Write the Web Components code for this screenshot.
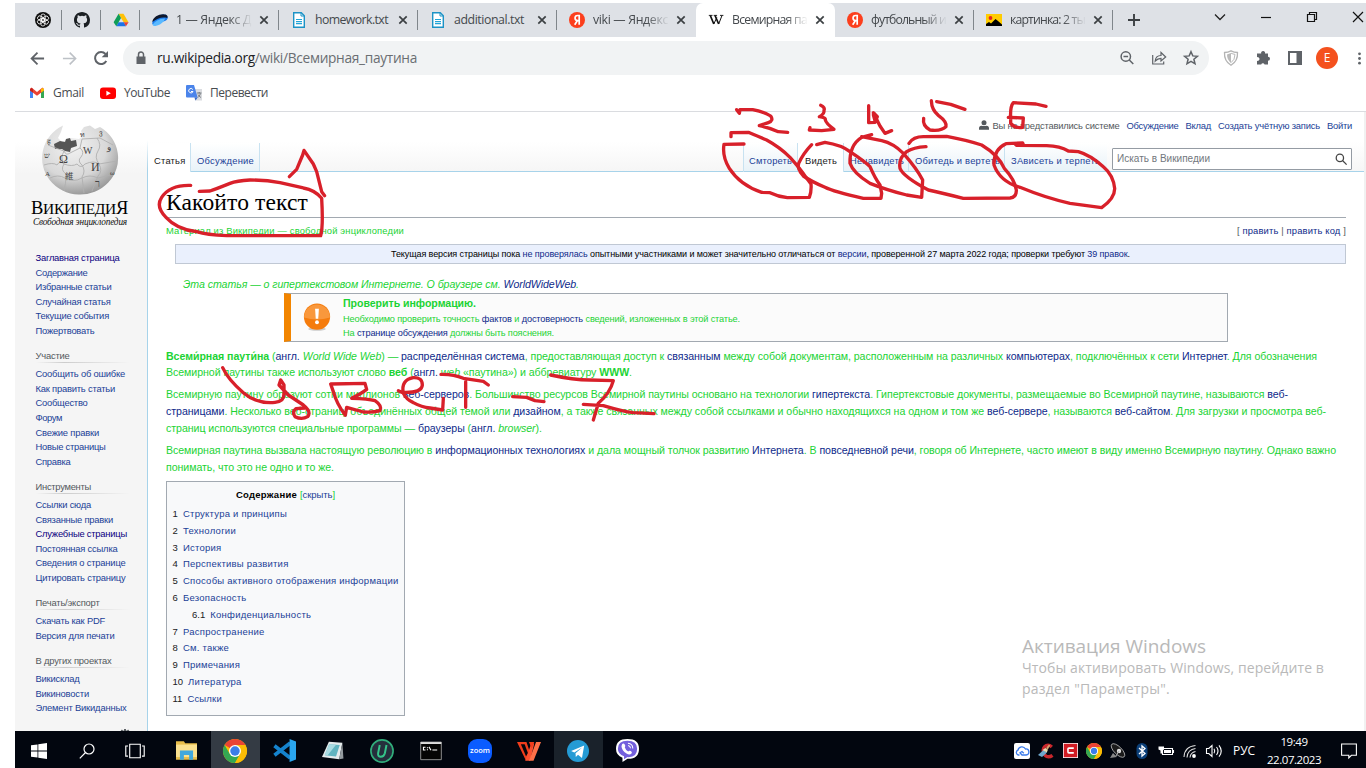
<!DOCTYPE html>
<html lang="ru">
<head>
<meta charset="utf-8">
<title>Всемирная паутина</title>
<style>
html,body{margin:0;padding:0;background:#fff;overflow:hidden}
</style>
</head>
<body>
<desk-top></desk-top>
<script>
const define = (name, css, html, after) => customElements.define(name, class extends HTMLElement {
  constructor() {
    super();
    this.attachShadow({ mode: 'open' });
  }
  connectedCallback() {
    const t = document.createElement('template');
    t.innerHTML = `<style>*{box-sizing:border-box}${css}</style>${typeof html === 'function' ? html(this) : html}`;
    this.shadowRoot.replaceChildren(t.content.cloneNode(true));
    if (after) after(this);
  }
});

/* One line of text set to a given measure through its letter spacing. */
define('fit-line', ':host{display:block;white-space:pre;width:max-content} span{display:inline-block}', '<span><slot></slot></span>', el => {
  const w = parseFloat(el.getAttribute('w'));
  if (!w) return;
  const n = el.textContent.length;
  const natural = el.shadowRoot.querySelector('span').getBoundingClientRect().width;
  if (n && natural) el.style.letterSpacing = ((w - natural) / n).toFixed(4) + 'px';
  el.style.width = w + 'px';
});

const ICONS = {
  gpt: '<circle cx="8" cy="8" r="8" fill="#111"/><g fill="none" stroke="#fff" stroke-width=".8"><rect x="6" y="2" width="4.200" height="7.400" rx="2.100"/><rect x="6" y="2" width="4.200" height="7.400" rx="2.100" transform="rotate(60 8 8)"/><rect x="6" y="2" width="4.200" height="7.400" rx="2.100" transform="rotate(120 8 8)"/><rect x="6" y="2" width="4.200" height="7.400" rx="2.100" transform="rotate(180 8 8)"/><rect x="6" y="2" width="4.200" height="7.400" rx="2.100" transform="rotate(240 8 8)"/><rect x="6" y="2" width="4.200" height="7.400" rx="2.100" transform="rotate(300 8 8)"/></g>',
  github: '<path fill="#1b1f23" d="M8 0C3.58 0 0 3.58 0 8c0 3.54 2.29 6.53 5.47 7.59.4.07.55-.17.55-.38 0-.19-.01-.82-.01-1.49-2.01.37-2.53-.49-2.69-.94-.09-.23-.48-.94-.82-1.13-.28-.15-.68-.52-.01-.53.63-.01 1.08.58 1.23.82.72 1.21 1.87.87 2.33.66.07-.52.28-.87.51-1.07-1.78-.2-3.64-.89-3.64-3.95 0-.87.31-1.59.82-2.15-.08-.2-.36-1.02.08-2.12 0 0 .67-.21 2.2.82a7.6 7.6 0 0 1 4 0c1.53-1.04 2.2-.82 2.2-.82.44 1.1.16 1.92.08 2.12.51.56.82 1.27.82 2.15 0 3.07-1.87 3.75-3.65 3.95.29.25.54.73.54 1.48 0 1.07-.01 1.93-.01 2.2 0 .21.15.46.55.38A8.01 8.01 0 0 0 16 8c0-4.42-3.58-8-8-8z"/>',
  drive: '<path fill="#ffc107" d="M5.600 1.800h4.900l5 8.400h-4.800L8 6z"/><path fill="#1a73e8" d="M5.400 10.200h5.600l2 4.100H3.300z"/><path fill="#0f9d58" d="M5.600 1.800 8 6 3.300 14.300.6 10.200z"/><path fill="#ea4335" d="M10.700 10.200h4.900L13 14.300z"/>',
  disk: '<path fill="#1c7df0" d="M.3 12.500C-.5 8 6 2.200 12 2.600c3 .1 4 1.900 3.700 3.900Q15 8 13 9z"/><path fill="#10182c" d="M.3 10C1 5 7 2 12 2.400c3.500 0 4 2.100 3.300 3.600C10 4.500 5 6.500.3 10z"/><path fill="#5ab9ff" d="M.7 13C2 9.500 8 6.300 13 6.500c-1 5-8 7.500-10.500 7.500Q1 14 .7 13z"/>',
  doc: '<path fill="#fff" stroke="#1c93c6" stroke-width="1.400" d="M2.700.7h7.600l3 3v11.600H2.700z"/><path d="M10 1v3h3" fill="none" stroke="#1c93c6"/><path stroke="#22a5d8" stroke-width="1.200" d="M5 7.500h6M5 9.600h6M5 11.700h6"/>',
  ya: '<circle cx="8" cy="8" r="8" fill="#fc3f1d"/><path fill="none" stroke="#fff" stroke-width="1.700" d="M10.200 12.800V3.500H8.600a2.500 2.500 0 0 0 0 5.100h1.600M8.300 8.700 5.700 12.800"/>',
  wiki: '<g fill="none" stroke="#111"><path stroke-width="1.700" d="m2.300 3.500 3.500 8.500M7 3.500l3.700 8.500"/><path stroke-width="1" d="m5.800 12 3-6.500M10.700 12 14 3.500"/><path stroke-width=".9" d="M.8 3.400h3.700M5.700 3.400h3.400M12 3.400h3.400"/></g>',
  image: '<path fill="#fc0" d="M0 2h16v12H0z"/><circle cx="4.500" cy="6" r="1.900" fill="#e52620"/><path d="M0 14v-2l3-2 2 1.500L9.500 7 12 9l4 3.500V14z"/>',
  close: '<path stroke="#3c4043" stroke-width="1.700" d="m4.300 4.300 7.400 7.400M11.700 4.300l-7.400 7.400"/>',
  plus: '<path stroke="#3c4043" stroke-width="1.900" d="M8 2v12M2 8h12"/>',
  chev: '<path fill="none" stroke="#222" stroke-width="1.300" d="m3 5.500 5 5 5-5"/>',
  min: '<path stroke="#111" stroke-width="1.200" d="M3 8.500h10"/>',
  restore: '<path fill="none" stroke="#111" stroke-width="1.200" d="M3.500 5.500h7v7h-7zM5.500 5.500v-2h7v7h-2"/>',
  wclose: '<path stroke="#111" stroke-width="1.200" d="m3 3 10 10M13 3 3 13"/>',
  back: '<path fill="none" stroke="#5f6368" stroke-width="1.900" d="M15 8H2M8 1.700 1.700 8 8 14.300"/>',
  fwd: '<path fill="none" stroke="#bdc1c6" stroke-width="1.700" d="M1 8h13M8.200 1.700 14.500 8l-6.300 6.300"/>',
  reload: '<path fill="none" stroke="#5f6368" stroke-width="2" d="M13.300 11A6 6 0 1 1 12.500 4"/><path fill="#5f6368" d="M15 1v6.300H8.700z"/>',
  lock: '<path fill="#5f6368" d="M3.500 6.500h9V14h-9z"/><path fill="none" stroke="#5f6368" stroke-width="1.500" d="M5.500 7V4.500a2.500 2.500 0 0 1 5 0V7"/>',
  zoomout: '<g fill="none" stroke="#5f6368" stroke-width="1.500"><circle cx="6.800" cy="6.500" r="4.700"/><path d="m10.300 10 4 4M4.500 6.500h4.600"/></g>',
  share: '<path fill="none" stroke="#5f6368" stroke-width="1.200" d="M1.700 5v9h11v-2.500M4.200 11C4.500 7.500 7 5.600 10 5.500V2.500L14.700 7 10 11V8.300C7.500 8.300 6 9 4.200 11z"/>',
  star: '<path fill="none" stroke="#5f6368" stroke-width="1.500" stroke-linejoin="miter" d="m8 1.700 1.800 4.200 4.600.4-3.500 3 1.100 4.500L8 11.400l-4 2.400 1.100-4.500-3.500-3 4.600-.4z"/>',
  shield: '<path fill="#fff" stroke="#b4b4b4" stroke-width="1.300" d="M1.500 2.500Q5 2.300 8 .8q3 1.500 6.500 1.700Q15 11 8 15.300 1 11 1.500 2.500z"/><path fill="#b9b9b9" d="M4 4.500 8 3v10Q4 10 4 4.500z"/><path fill="none" stroke="#b9b9b9" d="M8 3.200q2 .9 4 1.200Q12 10 8 12.700"/>',
  puzzle: '<path fill="#5f6368" d="M3 3.500h3.200a2 2 0 1 1 3.800 0h3v3.300a2 2 0 1 1 0 4V14.500H9.600a1.800 1.800 0 0 0-3.400 0H2v-3.700a1.900 1.900 0 1 0 0-3.600V3.500z"/>',
  panel: '<path fill="none" stroke="#5f6368" stroke-width="2" d="M2 2h12v12H2z"/><path fill="#5f6368" d="M9.500 2H14v12H9.500z"/>',
  dots: '<g fill="#5f6368"><circle cx="8" cy="3" r="1.500"/><circle cx="8" cy="8" r="1.500"/><circle cx="8" cy="13" r="1.500"/></g>',
  gmail: '<path fill="#4285f4" d="M1 4v9h3V7z"/><path fill="#34a853" d="M12 7v6h3V4z"/><path fill="#ea4335" d="m1 4 1.500-1.500L8 7l5.500-4.500L15 4v1.500L8 10.800 1 5.500z"/><path fill="#c5221f" d="M1 4 2.500 3 4 4v3.500L1 5.500z"/><path fill="#fbbc04" d="m15 4-1.500-1L12 4v3.500l3-2z"/>',
  youtube: '<rect y="2.500" width="16" height="11.500" rx="3" fill="#f00"/><path fill="#fff" d="m6.400 5.700 4.400 2.500-4.400 2.500z"/>',
  translate: '<path fill="#dadce0" d="M7 4h9v11.500H9z"/><path fill="#4b84ea" d="M1 0h7l3.700 12.500H1q-1 0-1-1V1q0-1 1-1z"/><path fill="#3467c9" d="m8.500 12.500 3.200 0L9.500 15.500z"/><path fill="none" stroke="#fff" stroke-width="1" d="M6.800 4.500A2.200 2.200 0 1 0 7 6.500H5"/><path fill="none" stroke="#6d7277" stroke-width=".9" d="M11 8h4.500M13.200 7v1.500M14.500 8.500q-1 3-2.500 4M12 9.500q1 2 3 3"/>',
  user: '<circle cx="8" cy="4.500" r="4" fill="#54595d"/><path fill="#54595d" d="M0 15.500v-2Q0 9 4 9q4 1.500 8 0 4 0 4 4.500v2z"/>',
  find: '<g fill="none" stroke="#444" stroke-width="1.700"><circle cx="6.500" cy="6.500" r="4.900"/><path d="m10 10 5.500 5.500"/></g>',
  win: '<path fill="#fff" d="M0 2.300 6.500 1.400v6.100H0zM7.300 1.300 16 0v7.500H7.300zM0 8.400h6.500v6.200L0 13.700zM7.300 8.400H16V16l-8.700-1.200z"/>',
  tsearch: '<g fill="none" stroke="#fff" stroke-width="1.200"><circle cx="10" cy="6" r="5"/><path d="M6.500 9.500.8 15.300"/></g>',
  tview: '<g fill="none" stroke="#fff"><path d="M3.300 2h9.400v12H3.300zM1.800 3.500h-2v9h2M14.200 3.500h2v9h-2"/></g>',
  explorer: '<path fill="#e8bd4a" d="M0 1h6l1 1.500h9V15H0z"/><path fill="#fbe18f" d="M0 3.500h16V13H0z"/><path fill="#41a8dd" d="M3 8h10v7h-3v-3.500H6V15H3z"/>',
  chrome: '<circle cx="8" cy="8" r="8" fill="#fbbc04"/><path fill="#ea4335" d="M8 8 1.070 4A8 8 0 0 1 14.930 4H8z"/><path fill="#34a853" d="M1.070 4A8 8 0 0 0 8 16L11.460 10 8 8 4.540 10z"/><path fill="#fbbc04" d="M8 4h6.930A8 8 0 0 1 8 16l3.460-6z"/><circle cx="8" cy="8" r="4" fill="#fff"/><circle cx="8" cy="8" r="3.150" fill="#3b7de9"/>',
  vscode: '<path fill="none" stroke="#1583cd" stroke-width="2.600" d="m12 2.800-11 8.500M12 13.200 1 4.700"/><path fill="#2aa5ee" d="M11.500 0 16 1.800v12.400L11.500 16z"/>',
  notepad: '<path fill="#e4eaec" d="M5 1.200 14.800 2 12.500 14 0 12.300z"/><path fill="#61b4c0" d="m5.200 3 7.700.7L10.200 12l-8.200-1z"/><path fill="#a9dbe2" d="m5.200 3 5 .4L4 11.200l-2-.3z"/><path fill="#949b9f" d="m14.800 2 .8 11.500-3.100.5z"/>',
  iobit: '<circle cx="8" cy="8" r="7.400" fill="#252f3c" stroke="#31ad7b" stroke-width="1.100"/><path fill="none" stroke="#35c58a" stroke-width="1.300" d="M6.500 4 5.400 9.500q-.3 2.300 1.800 2.300T9.900 9.500L11 4"/>',
  cmd: '<path fill="#050505" stroke="#a9a9a9" stroke-width=".6" d="M.5 1.500h15v12.800H.5z"/><path fill="#ddd" d="M.5 1.500h15v1.400H.5z"/><path fill="none" stroke="#fff" stroke-width=".8" d="M4 5.300H2.500v2H4M5.400 5.300v.7M5.400 6.700v.7M6.500 5l1.500 2.500M9 7.300h3.500"/>',
  wps: '<path fill="#f23d1c" d="M0 2h6.300L9 10l-3 4.500z"/><path fill="#05070c" d="M2.600 3.500h2.500L7.300 9.500l-1.300 2z"/><path fill="#fa5030" d="M5.500 14.500 9.500 3l2 0L8.800 14.500z"/><path fill="#ff7048" d="M11 14.500 16 2h-3.300L8 14.500z"/><path fill="#f23d1c" d="M8 2h3.500L9.800 6.500z"/>',
  telegram: '<circle cx="8" cy="8" r="8" fill="#249bd5"/><path fill="#fff" d="m3 8 9.500-4-1.600 9L8 10.800l-1.600 1.500-.2-2.600L11 5.500 5.300 9z"/>',
  viber: '<path fill="#fff" d="M8 0q8 0 8 6.800Q16 14 8 13.800L4.500 16v-3Q0 11.500 0 6.800 0 0 8 0z"/><path fill="#7360dd" d="M8 1.200q6.700 0 6.700 5.600Q14.700 13 8 12.600L5.600 14v-2Q1.300 10.500 1.300 6.800 1.300 1.200 8 1.200z"/><path fill="#fff" d="M4.300 3.500q1-.9 1.800.4.800 1.200 0 1.800Q6.800 8 8.500 8.700q.8-1 1.800-.3 1.300.9.500 1.700-1.400 1.300-3.500-.1Q4 8 3.800 5z"/><path fill="none" stroke="#fff" stroke-width=".7" d="M8.300 3q3.300.3 3.400 3.600M8.400 4.600q1.600.2 1.700 1.800"/>',
  cloud: '<rect width="16" height="16" rx="2" fill="#fff"/><path fill="none" stroke="#3b7bea" stroke-width="1.300" d="M5.500 12H4.300A2.500 2.500 0 0 1 4 7.200 4 4 0 0 1 11.500 6a3 3 0 0 1 .7 6H8L6 9.800l2-1.300 1.800 1.800"/>',
  ccleaner: '<path fill="none" stroke="#c8272c" stroke-width="3.400" d="M13.800 4Q11 1.300 8.300 2.500 4.500 4.500 5.500 9q1 4.800 5 4.800 2 0 4-1.500"/><path fill="#d9a06a" d="m8 5 3-3.500 1.200 1L9.500 7z"/><path fill="#6fa7cc" d="M5.500 7 9 9.500 4 14 0 12z"/><path fill="#e9d9b0" d="m4.500 7 3-2 2.300 2-1 2.500z"/>',
  redc: '<path fill="#fff" d="M0 0h16v16H0z"/><path fill="#d21d24" d="M.8.8h14.400v14.400H.8z"/><path fill="none" stroke="#fff" stroke-width="1.700" d="M11.500 5.500H6.300q-1 0-1 1v3q0 1 1 1h5.200"/>',
  dish: '<path fill="#888" d="m0 15 3-5 4 4z"/><ellipse cx="8" cy="7.500" rx="3.800" ry="8.800" transform="rotate(-45 8 7.500)" fill="#1b1b1b" stroke="#bbb" stroke-width=".8"/><circle cx="9" cy="8" r="2.200" fill="#ddd"/><path stroke="#aaa" d="M9 8 6 13"/>',
  bt: '<rect x="2.500" width="11" height="16" rx="5.500" fill="#0b3f78"/><path fill="none" stroke="#fff" stroke-width="1.300" d="m5 5 6 5.500L8 13V3l3 2.500L5 11"/>',
  battery: '<path fill="none" stroke="#fff" stroke-width="1.100" d="M4.500 5.500h10v6h-10zM15.500 7v3"/><path fill="#fff" d="M6 7h7v3H6zM.500 3.500h5.500v3l-1.500 1v3h-2v-3l-2-1z"/>',
  wifi: '<g fill="none" stroke="#ddd" stroke-width="1.100"><path d="M2 14Q2.500 3.500 13.500 2.500M5 14.500Q5.500 6.500 13.500 5.500M8 14.500Q8.500 9.500 13.500 8.500"/></g><circle cx="12" cy="13" r="1.900" fill="#fff"/>',
  sound: '<path fill="none" stroke="#fff" stroke-width="1.100" d="M.5 5.500h2.300L6 2.500v11l-3.200-3H.5zM8 5.800q1.500 2.200 0 4.400M10.500 4q3 4 0 8M13 2.300q4.500 5.700 0 11.400"/>',
  notif: '<path fill="none" stroke="#fff" stroke-width="1.100" d="M.6 1h14.800v11.300h-5l-2.600 2.700v-2.700H.6z"/>',
  warn: '<ellipse cx="8" cy="14.800" rx="5" ry="1" fill="#ccc"/><circle cx="8" cy="7.800" r="7.500" fill="#f57c0d"/><path fill="#f9a24c" d="M.6 8.300a7.400 7.400 0 0 1 14.800 0Q8 10.500 .6 8.300z" opacity=".75"/><path fill="#fff" d="M6.900 3.300h2.200l-.4 5.700H7.300z"/><circle cx="8" cy="11" r="1.100" fill="#fff"/>',
  gear: '<circle cx="8" cy="8" r="4.500" fill="none" stroke="#54595d" stroke-width="3"/><path stroke="#54595d" stroke-width="3" d="M8 0v3M2 2l3 3M14 2l-3 3"/>'
};
define('x-icon', ':host{display:block;flex:none}svg{display:block;overflow:visible}', el => {
  const s = el.getAttribute('s') || 16;
  return `<svg width="${s}" height="${s}" viewBox="0 0 16 16">${ICONS[el.getAttribute('n')]}</svg>`;
});

define('browser-tab', `
  :host{display:flex;align-items:center;width:139px;height:34px;position:relative;padding-left:12px;color:#45494d}
  :host([pinned]){width:39px;padding-left:12px}
  :host(:not([active]):not([nosep]))::after{content:"";position:absolute;right:0;top:7px;width:1px;height:20px;background:#80868b}
  :host([active]){background:#fff;border-radius:7px 7px 0 0}
  .t{margin-left:8px;width:76px;overflow:hidden;font-size:12.300px;line-height:20px}
  .fade{-webkit-mask-image:linear-gradient(90deg,#000 70%,transparent 100%);mask-image:linear-gradient(90deg,#000 70%,transparent 100%)}
  .c{margin-left:4px}`,
  el => el.hasAttribute('pinned') ? `<x-icon n="${el.getAttribute('icon')}"></x-icon>` :
  `<x-icon n="${el.getAttribute('icon')}"></x-icon><div class="t ${el.hasAttribute('fade') ? 'fade' : ''}"><fit-line w="${el.getAttribute('w')}">${el.getAttribute('label')}</fit-line></div><x-icon class="c" n="close"></x-icon>`);

define('tab-strip', `
  :host{display:flex;height:34px;background:#dee1e6;padding-left:8px;position:relative;overflow:hidden}
  browser-tab{flex:none}
  .plus{padding:9px 0 0 13px}
  .ctl{margin-left:auto;display:flex;gap:30px;padding:6px 0 0;width:154px;flex:none}`, `
  <browser-tab pinned icon="gpt"></browser-tab><browser-tab pinned icon="github"></browser-tab><browser-tab pinned icon="drive"></browser-tab>
  <browser-tab icon="disk" label="1 — Яндекс Д" w="75" fade></browser-tab>
  <browser-tab icon="doc" label="homework.txt" w="73"></browser-tab>
  <browser-tab icon="doc" label="additional.txt" w="70"></browser-tab>
  <browser-tab icon="ya" label="viki — Яндекс" w="75" fade nosep></browser-tab>
  <browser-tab icon="wiki" label="Всемирная па" w="75" fade active></browser-tab>
  <browser-tab icon="ya" label="футбольный и" w="75" fade></browser-tab>
  <browser-tab icon="image" label="картинка: 2 ты" w="75" fade></browser-tab>
  <div class="plus"><x-icon n="plus"></x-icon></div>
  <div class="ctl"><x-icon n="chev"></x-icon><x-icon n="min"></x-icon><x-icon n="restore"></x-icon><x-icon n="wclose"></x-icon></div>`);

define('tool-bar', `
  :host{display:flex;height:42px;padding-left:6px;overflow:hidden;font-size:13.700px}
  .i{width:32px;height:42px;display:flex;align-items:center;justify-content:center;flex:none}
  .omni{margin:4px 6px 4px;width:1086px;flex:none;height:34px;border-radius:17px;background:#f1f3f4;display:flex;align-items:center;padding:0 2px 0 10px;color:#6a6e72}
  .omni .i{height:34px}
  .omni fit-line{margin-left:8px;line-height:22px;flex:1}
  b{font-weight:400;color:#202124}
  .av{width:22px;height:22px;border-radius:50%;background:#f4511e;color:#fff;font-size:12px;line-height:22px;text-align:center}`, `
  <div class="i"><x-icon n="back" s="15"></x-icon></div><div class="i"><x-icon n="fwd" s="15"></x-icon></div><div class="i"><x-icon n="reload"></x-icon></div>
  <div class="omni"><x-icon n="lock"></x-icon><fit-line w="260"><b>ru.wikipedia.org</b>/wiki/Всемирная_паутина</fit-line><span style="flex:1"></span>
  <div class="i"><x-icon n="zoomout"></x-icon></div><div class="i"><x-icon n="share"></x-icon></div><div class="i"><x-icon n="star"></x-icon></div></div>
  <div class="i"><x-icon n="shield"></x-icon></div><div class="i"><x-icon n="puzzle"></x-icon></div><div class="i"><x-icon n="panel"></x-icon></div><div class="i"><div class="av">E</div></div><div class="i"><x-icon n="dots" s="15"></x-icon></div>`);

define('bookmarks-bar', `
  :host{display:flex;align-items:center;height:33px;border-bottom:1px solid #dadce0;padding:0 0 5px 14px;font-size:12px;line-height:18px;color:#484c50}
  fit-line{margin:0 16px 0 8px}`, `
  <x-icon n="gmail"></x-icon><fit-line w="31">Gmail</fit-line><x-icon n="youtube"></x-icon><fit-line w="46">YouTube</fit-line><x-icon n="translate"></x-icon><fit-line w="58">Перевести</fit-line>`);

define('wiki-logo', `
  :host{display:block;width:132px;height:139px;padding-top:12px}
  svg{display:block;margin-left:25px}
  .n{font:18.500px/20px "Liberation Serif",serif;color:#000;padding:1px 0 0 16px}
  .n i{font-style:normal;font-size:15.500px}
  .s{font:italic 9.300px/10px "Liberation Serif",serif;color:#111;padding:0 0 0 18px;margin-top:-2px}`, `
  <svg width="80" height="73" viewBox="0 0 80 73">
    <defs><radialGradient id="g" cx=".4" cy=".3" r=".75"><stop offset="0" stop-color="#f2f2f2"/><stop offset=".6" stop-color="#d8d8d8"/><stop offset="1" stop-color="#909090"/></radialGradient></defs>
    <path fill="url(#g)" d="M22 1.500A38 36.500 0 1 0 59 3L54 5 49 1.500 43 3 40 7 42 12 38 15 30 14 21 18 17 14 20 8z" transform="translate(1 0)"/>
    <path fill="#555" d="M14 20 20 17 25 18 26 15 30 14 31 17 36 16 37 22 31 24 30 28 25 27 22 25 15 25z"/>
    <g fill="none" stroke="#b0b0b0" stroke-width=".9"><path d="M8 21q10 4 16 6 2 5 6 2l10-5 2-9 18-1 13 7M4 41q9-3 13 0 3-5 7-1 8 3 13 0 4 5 8 0 9-4 14 0l18-3M24 27q-4 7 0 13-4 6 2 10 0 10-2 17M40 24q5 4 1 9-4 4 1 8 4 6 0 12l2 16M57 14q5 7 1 13-4 6 1 13 4 7-1 12l-6 15M10 54q8-4 15 0 8 5 17 0 8-4 16 0l12-3"/></g>
    <g fill="#444" font-family="Liberation Serif,serif" font-size="12"><text x="19" y="38.500">Ω</text><text x="43" y="30" font-size="10">W</text><text x="51" y="47" font-size="12">И</text><text x="25" y="55" font-size="8.500" font-family="Noto Sans CJK JP,sans-serif">維</text><text x="55" y="63" font-size="10">ר</text><text x="4" y="34" font-size="8">ש</text><text x="67" y="26" font-size="9">و</text><text x="40" y="13" font-size="7">ท</text><text x="59" y="11" font-size="7">ვ</text><text x="7" y="20" font-size="7">ह</text><text x="5" y="52" font-size="7">A</text><text x="70" y="51" font-size="7">ω</text></g>
  </svg>
  <fit-line class="n" w="97">В<i>ИКИПЕДИ</i>Я</fit-line><fit-line class="s" w="94">Свободная энциклопедия</fit-line>`);

const NAV = [
  [null, [['Заглавная страница', 84, 1], ['Содержание', 52], ['Избранные статьи', 76], ['Случайная статья', 75], ['Текущие события', 73.5], ['Пожертвовать', 59]]],
  [['Участие', 34], [['Сообщить об ошибке', 89.5], ['Как править статьи', 79.5], ['Сообщество', 52], ['Форум', 26.5], ['Свежие правки', 63.500], ['Новые страницы', 70], ['Справка', 35]]],
  [['Инструменты', 55.5], [['Ссылки сюда', 55.5], ['Связанные правки', 77.5], ['Служебные страницы', 91.5, 1], ['Постоянная ссылка', 82], ['Сведения о странице', 90], ['Цитировать страницу', 90]]],
  [['Печать/экспорт', 64], [['Скачать как PDF', 69.500], ['Версия для печати', 79]]],
  [['В других проектах', 76], [['Викисклад', 44], ['Викиновости', 53.5], ['Элемент Викиданных', 91]]]
];
define('side-nav', `
  :host{display:block;width:133px;flex:none;background:linear-gradient(#fff 30px,#f5f5f5 62px);font-size:9.400px;color:#1b3f97;position:relative}
  :host::after{content:"";position:absolute;right:0;top:28px;bottom:0;width:1px;background:linear-gradient(#fff0,#a7d3ea 30px)}
  .l{padding-left:20.500px;line-height:14.600px;height:14.600px}
  .v{color:#0b0080}
  .h{margin:10.700px 0 4.400px 20.500px;height:13.600px;width:94px;line-height:13.600px;color:#54595d;background:linear-gradient(90deg,#ccc0,#ccc 30%,#ccc0) bottom/100% 1px no-repeat}
  .last{display:flex;align-items:center;justify-content:space-between;margin-top:11.500px}`,
  '<wiki-logo></wiki-logo>' + NAV.map(([h, ls]) => (h ? `<div class="h"><fit-line w="${h[1]}">${h[0]}</fit-line></div>` : '') +
    ls.map(([t, w, v]) => `<div class="l ${v ? 'v' : ''}"><fit-line w="${w}">${t}</fit-line></div>`).join('')).join('') +
  '<div class="h last"><fit-line w="76">На других языках</fit-line><x-icon n="gear" s="10"></x-icon></div>');

define('wiki-head', `
  :host{display:block;height:60px;background:linear-gradient(#fff 50%,#f6f6f6);border-bottom:1px solid #a7d3ea;font-size:9.400px;color:#1b3f97;line-height:12px}
  .p{height:31px;display:flex;justify-content:flex-end;gap:7px;padding:8px 12px 0 0}
  .p x-icon{margin-right:-3px}
  .r{display:flex;height:29px}
  .tab{height:28px;border-right:1px solid #c8e2f1;padding:12px 0 0 6px;background:linear-gradient(#fff,#e8f2f8);flex:none}
  .on{background:#fff;color:#202122;height:29px}
  .sp{width:484px;flex:none;border-right:1px solid #c8e2f1}
  .s{margin:5px 0 0 5px;width:240px;height:22px;background:#fff;border:1px solid #949ba3;border-radius:1px;color:#72777d;display:flex;align-items:center;justify-content:space-between;padding:0 4px;font-size:10px}`, `
  <div class="p"><x-icon n="user" s="10"></x-icon><fit-line w="127" style="color:#54595d">Вы не представились системе</fit-line><fit-line w="52">Обсуждение</fit-line><fit-line w="25.500">Вклад</fit-line><fit-line w="102">Создать учётную запись</fit-line><fit-line w="25">Войти</fit-line></div>
  <div class="r"><div class="tab on" style="width:43px"><fit-line w="31.500">Статья</fit-line></div><div class="tab" style="width:69px"><fit-line w="57">Обсуждение</fit-line></div><div class="sp"></div>
  <div class="tab" style="width:54px;padding-left:5px"><fit-line w="43">Смтореть</fit-line></div><div class="tab on" style="width:46px;padding-left:7px"><fit-line w="32">Видеть</fit-line></div><div class="tab" style="width:65px"><fit-line w="54">Ненавидеть</fit-line></div><div class="tab" style="width:96px"><fit-line w="85">Обитедь и вертеть</fit-line></div><div class="tab" style="width:102px;border:0"><fit-line w="89">ЗАвисеть и терпеть</fit-line></div>
  <div class="s"><fit-line w="93">Искать в Википедии</fit-line><x-icon n="find" s="12"></x-icon></div></div>`);

define('amb-box', `
  :host{display:flex;width:944px;height:49px;margin:0 0 0 118px;border:1px solid #a2a9b1;border-left:7px solid #f28500;background:#fbfbfb}
  x-icon{margin:9px 0 0 12px}
  .x{margin-left:12px;padding-top:2px;font-size:9.200px;line-height:14px}
  .b{font-weight:700;font-size:10.600px;line-height:14px;margin-bottom:2px}
  ::slotted(*){display:block}`, `
  <x-icon n="warn" s="28"></x-icon><div class="x"><div class="b"><slot name="title"></slot></div><slot></slot></div>`);

define('toc-box', `
  :host{display:block;width:239px;height:235px;margin-top:5px;border:1px solid #a2a9b1;background:#f8f9fa;font-size:9.500px;color:#1b3f97;padding:5px 0 0 5.500px}
  .t{display:flex;gap:3px;color:#000;line-height:15px;padding-left:63.500px;margin-bottom:4px}
  b{color:#000} span{color:#1b3f97}
  .r{display:flex;height:16.800px;line-height:16.800px}
  .n{color:#202122;min-width:10.500px;padding-right:5px}
  .sub{margin-left:19.500px}`,
  `<div class="t"><fit-line w="61"><b>Содержание</b></fit-line><fit-line w="35" style="color:#1bd334">[<span>скрыть</span>]</fit-line></div>` +
  [['1', 'Структура и принципы', 104], ['2', 'Технологии', 53], ['3', 'История', 38.5], ['4', 'Перспективы развития', 105.5], ['5', 'Способы активного отображения информации', 215.5], ['6', 'Безопасность', 63.5], ['6.1', 'Конфиденциальность', 101], ['7', 'Распространение', 81.500], ['8', 'См. также', 46], ['9', 'Примечания', 57], ['10', 'Литература', 53.5], ['11', 'Ссылки', 34.5]]
    .map(([n, t, w]) => `<div class="r ${n === '6.1' ? 'sub' : ''}"><div class="n">${n}</div><fit-line w="${w}">${t}</fit-line></div>`).join(''));

define('wiki-article', `
  :host{display:block;padding:0 0 0 18px;font-size:10.600px;color:#1bd334}
  a{color:#0e2a8a}
  .title{height:46px;width:1180px;border-bottom:1px solid #a2a9b1;padding-top:15px;color:#000;font:23.500px/30px "Liberation Serif",serif;white-space:nowrap}
  .sub{width:1180px;height:26px;display:flex;justify-content:space-between;line-height:26px;font-size:9.400px}
  .ban{margin-left:9px;width:1171px;height:20px;border:1px solid #c0c8d4;background:#eaf0fd;color:#000;font-size:9px;line-height:18px;padding-left:215px}
  .hat{margin:12px 0 0 17px;line-height:17px;font-style:italic}
  .p{line-height:17px;margin-bottom:5.200px}
  .ln{display:flex}`, `
  <div class="title"><fit-line w="142">Какойто текст</fit-line></div>
  <div class="sub"><fit-line w="238">Материал из Википедии — свободной энциклопедии</fit-line><fit-line w="109" style="color:#54595d">[ <a>править</a> | <a>править код</a> ]</fit-line></div>
  <div class="ban"><fit-line w="739">Текущая версия страницы пока <a>не проверялась</a> опытными участниками и может значительно отличаться от <a>версии</a>, проверенной 27 марта 2022 года; проверки требуют <a>39 правок</a>.</fit-line></div>
  <div class="hat"><fit-line w="396">Эта статья — о гипертекстовом Интернете. О браузере см. <a>WorldWideWeb</a>.</fit-line></div>
  <amb-box><fit-line slot="title" w="133">Проверить информацию.</fit-line><fit-line w="397">Необходимо проверить точность <a>фактов</a> и <a>достоверность</a> сведений, изложенных в этой статье.</fit-line><fit-line w="211">На <a>странице обсуждения</a> должны быть пояснения.</fit-line></amb-box>
  <div class="p" style="margin-top:6px;line-height:16.200px"><div class="ln"><fit-line w="235"><b>Всеми́рная паути́на</b> (<a>англ.</a> <i>World Wide Web</i>) — </fit-line><fit-line w="266"><a>распределённая система</a>, предоставляющая доступ к </fit-line><fit-line w="339"><a>связанным</a> между собой документам, расположенным на различных </fit-line><fit-line w="176"><a>компьютерах</a>, подключённых к сети </fit-line><fit-line w="135"><a>Интернет</a>. Для обозначения</fit-line></div>
  <fit-line w="466">Всемирной паутины также используют слово <b>веб</b> (<a>англ.</a> <i>web</i> «паутина») и аббревиатуру <b>WWW</b>.</fit-line></div>
  <div class="p"><div class="ln"><fit-line w="237">Всемирную паутину образуют сотни миллионов </fit-line><fit-line w="72"><a>веб-серверов</a>. </fit-line><fit-line w="337">Большинство ресурсов Всемирной паутины основано на технологии </fit-line><fit-line w="64"><a>гипертекста</a>. </fit-line><fit-line w="412">Гипертекстовые документы, размещаемые во Всемирной паутине, называются <a>веб-</a></fit-line></div>
  <fit-line w="1160"><a>страницами</a>. Несколько веб-страниц, объединённых общей темой или <a>дизайном</a>, а также связанных между собой ссылками и обычно находящихся на одном и том же <a>веб-сервере</a>, называются <a>веб-сайтом</a>. Для загрузки и просмотра веб-</fit-line>
  <fit-line w="376">страниц используются специальные программы — <a>браузеры</a> (<a>англ.</a> <i>browser</i>).</fit-line></div>
  <div class="p"><fit-line w="1170">Всемирная паутина вызвала настоящую революцию в <a>информационных технологиях</a> и дала мощный толчок развитию <a>Интернета</a>. В <a>повседневной речи</a>, говоря об Интернете, часто имеют в виду именно Всемирную паутину. Однако важно</fit-line>
  <fit-line w="168">понимать, что это не одно и то же.</fit-line></div>
  <toc-box></toc-box>`);

define('wiki-page', `
  :host{display:flex;height:619px;overflow:hidden;font-family:"Liberation Sans",Arial,sans-serif}
  .m{width:1216px;flex:none}
  .sb{width:2px;background:#f1f1f1}`, `
  <side-nav></side-nav><div class="m"><wiki-head></wiki-head><wiki-article></wiki-article></div><div class="sb"></div>`);

define('task-bar', `
  :host{display:flex;height:37px;background:#02060f;color:#fff;font-size:12px}
  .c{width:49px;height:37px;display:flex;align-items:center;justify-content:center;padding-top:2px;flex:none}
  .k{width:48px}
  .on{background:#343b44}.on2{background:#1a222b}
  .t{width:24px}
  .zoom{width:24px;height:24px;border-radius:9px;background:#0b5cff;font-size:7.500px;line-height:22px;text-align:center;font-weight:600}
  .clk{width:62px;display:flex;flex-direction:column;align-items:center;font-size:11.500px;line-height:18px;padding-top:2px;flex:none}
  .lng{width:23px;line-height:39px;margin:0 7px 0 7px;flex:none}`,
  [['win', 16], ['tsearch', 16], ['tview', 18]].map(([n, s]) => `<div class="c k"><x-icon n="${n}" s="${s}"></x-icon></div>`).join('') + '<div style="width:2.500px;flex:none"></div>' +
  [['explorer', 21], ['chrome', 24, 'on'], ['vscode', 23], ['notepad', 22], ['iobit', 24], ['cmd', 22], ['zoom'], ['wps', 24], ['telegram', 22, 'on2'], ['viber', 23]].map(([n, s, c]) => `<div class="c ${c || ''}">${n === 'zoom' ? '<div class="zoom">zoom</div>' : `<x-icon n="${n}" s="${s}"></x-icon>`}</div>`).join('') +
  '<div style="width:358.500px;flex:none"></div>' +
  ['cloud', 'ccleaner', 'redc', 'chrome', 'dish', 'bt', 'battery', 'wifi', 'sound'].map(n => `<div class="c t"><x-icon n="${n}" s="${n === 'redc' ? 15 : 16}"></x-icon></div>`).join('') +
  '<div class="lng"><fit-line w="22">РУС</fit-line></div><div class="clk"><fit-line w="27">19:49</fit-line><fit-line w="54">22.07.2023</fit-line></div><div class="c" style="margin-left:-1px"><x-icon n="notif"></x-icon></div>');

define('win-watermark', `
  :host{position:absolute;left:1022px;top:634px;color:#b9b9b9;font-size:14px;line-height:20.500px}
  .a{font-size:19px;line-height:24px}`,
  '<fit-line class="a" w="184">Активация Windows</fit-line><fit-line w="302">Чтобы активировать Windows, перейдите в</fit-line><fit-line w="148">раздел "Параметры".</fit-line>');

define('pen-marks', `
  :host{position:absolute;left:0;top:0;width:1366px;height:768px;pointer-events:none}
  svg{display:block}`, `
  <svg width="1366" height="768" fill="none" stroke="#d8202a" stroke-width="10" stroke-linecap="round" stroke-linejoin="round">
  <g transform="translate(700 90) scale(.33333)">
    <path d="M110 59 118 70 120 59 158 59Q195 66 212 78 222 92 205 98L178 107Q205 112 235 125L263 127"/>
    <path d="M362 46Q376 52 372 62 374 72 358 80 378 82 376 90 378 100 402 118L365 122 328 120 330 113"/>
    <path d="M506 47 506 98 525 97 532 80 520 68 540 108 555 130 575 122"/>
    <path stroke-width="14" d="M522 74 527 92"/>
    <path d="M694 32Q695 60 715 76 742 96 738 110 725 124 690 120 667 108 671 85M710 35 752 43 780 53 795 58"/>
    <path d="M1038 49 1008 42 940 38Q930 50 932 85L932 100Q945 116 968 112L970 84 925 82"/>
    <path d="M132 162 72 163Q66 200 88 235 120 285 185 307L210 308Q235 320 262 323L328 322Q335 305 333 280M93 140 93 128 145 127Q180 142 200 150 240 172 270 202 300 235 318 262L333 282"/>
    <path d="M350 164 375 157Q425 165 450 185 495 215 510 230 525 265 540 285L545 310 543 325 490 325Q400 305 375 292 335 275 310 258 290 235 296 220 310 190 335 164"/>
    <path d="M515 134 485 142Q448 165 450 220 460 250 510 280 560 300 620 315L665 322 668 270Q650 235 610 190 580 160 545 152L485 140"/>
    <path d="M627 160Q640 140 670 140L740 139Q800 150 845 165 895 195 913 235 945 270 949 300 950 322 930 324L790 325Q730 310 685 300 610 260 600 235 595 205 620 185 640 172 678 170"/>
    <path stroke-width="13" d="M948 163H968"/>
    <path d="M968 159 918 161Q880 178 882 225 900 275 960 292 1040 325 1110 340L1205 353Q1245 325 1244 295 1240 255 1210 230 1170 195 1135 185L1105 183Q1080 168 1040 167L950 166"/>
  </g>
  <g transform="translate(0 110) scale(.33333)">
    <path d="M572 226Q510 224 485 262 466 290 498 322 530 358 590 365 620 375 680 377L962 377Q970 350 965 265 945 240 910 234L840 218Q800 210 750 210 710 212 690 220 645 238 630 243L598 244"/>
    <path d="M868 200 890 178 908 135 912 121 940 162 950 185 965 245 974 257"/>
  </g>
  <g transform="translate(160 270) scale(.33333)">
    <path d="M188 293Q205 330 250 368 290 402 345 397 372 395 372 372L372 345 362 330 357 345 385 375 430 405Q455 425 443 440 425 450 405 440 395 425 408 416L435 414"/>
    <path d="M512 342 615 340 620 358Q605 370 575 385 625 386 645 392 668 408 660 422 640 428 610 426L560 412 556 436Q530 402 520 365z"/>
    <path d="M715 362 725 367Q785 370 787 345 787 322 760 323 722 330 730 370 740 390 760 398 785 412 810 414L848 420 850 385"/>
    <path d="M843 313Q880 312 910 325L970 334 985 345M917 335 917 412"/>
    <path d="M1058 380 1100 382 1125 392 1152 395"/>
    <path d="M1172 315Q1240 330 1290 330L1360 332Q1350 370 1315 400L1300 450M1270 403 1330 407Q1390 425 1420 428L1482 431"/>
  </g></svg>`);

define('desk-top', `
  :host{display:block;box-sizing:border-box;position:relative;width:1366px;height:768px;overflow:hidden;background:#fff;padding:3px 0 0 15px;font-family:"Open Sans","Noto Sans",sans-serif}`, `
  <tab-strip></tab-strip><tool-bar></tool-bar><bookmarks-bar></bookmarks-bar><wiki-page></wiki-page><task-bar></task-bar>
  <win-watermark></win-watermark><pen-marks></pen-marks>`);
</script>
</body>
</html>
